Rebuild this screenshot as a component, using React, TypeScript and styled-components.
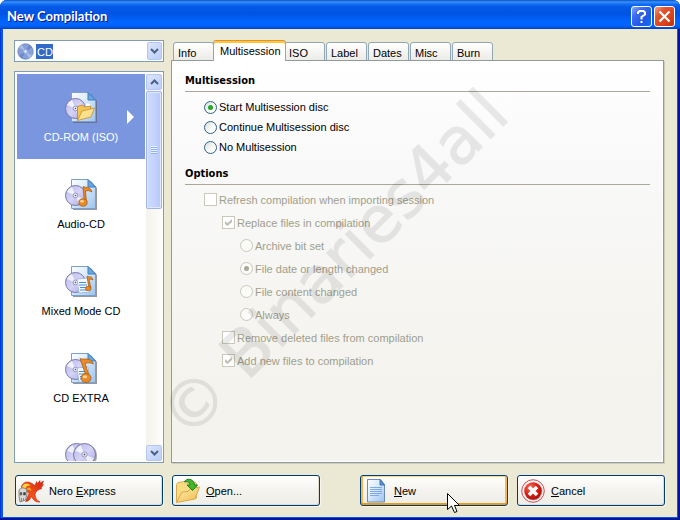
import React, { useState } from "react";
import styled, { createGlobalStyle, css } from "styled-components";

const uiFont = `"Liberation Sans", Arial, sans-serif`;
const headingFont = `"DejaVu Sans Condensed", "DejaVu Sans", sans-serif`;

const GlobalStyle = createGlobalStyle`
  *, *::before, *::after { box-sizing: border-box; }
  body { margin: 0; background: #fff; font: 11px/14px ${uiFont}; color: #000; }
  button, select, input { font: inherit; color: inherit; margin: 0; }
`;

const Window = styled.div`
  height: 100vh;
  min-height: 400px;
  display: flex;
  flex-direction: column;
  padding: 0 3px 3px;
  overflow: hidden;
  border-radius: 7px 7px 0 0;
  background: #0b55ea;
  box-shadow: inset -2px -2px #00169c, inset 1px 0 #0038d0;
`;

const TitleBar = styled.header`
  flex: none;
  height: 29px;
  margin: 0 -3px;
  padding: 3px 5px 0 7px;
  display: flex;
  align-items: center;
  gap: 2px;
  background: linear-gradient(#0a50c8 0, #3a92fb 2px, #1370f6 4px, #0358e6 7px, #0054e3 14px, #0062fb 20px, #0066ff 25px, #0058ea 27px, #0040c4 29px);
`;

const Title = styled.h1`
  flex: 1;
  margin: 0;
  font: bold 13px/18px Lato, "Open Sans", sans-serif;
  color: #fff;
  text-shadow: 1px 1px #0a1883;
`;

const CaptionButton = styled.button<{ $close?: boolean }>`
  width: 21px;
  height: 21px;
  padding: 0;
  display: grid;
  place-items: center;
  border: 1px solid #fff;
  border-radius: 3px;
  background: ${(p) =>
    p.$close
      ? "linear-gradient(135deg, #f0a088, #e2562f 30%, #d8401a 70%, #b83410)"
      : "linear-gradient(135deg, #8fa9f5, #3c6cec 30%, #2058e8 65%, #1a6cf4)"};
`;

const Body = styled.main`
  flex: 1;
  min-height: 0;
  display: flex;
  flex-direction: column;
  background: #ebe8d4;
`;

const Columns = styled.div`
  flex: 1;
  min-height: 0;
  display: grid;
  grid-template-columns: 150px minmax(0, 1fr);
  gap: 7px;
  padding: 11px 13px 0 11px;
`;

const Sidebar = styled.div`
  min-height: 0;
  display: flex;
  flex-direction: column;
  gap: 9px;
`;

const Combo = styled.div`
  position: relative;
  flex: none;
  height: 22px;
  border: 1px solid #7f9db9;
  background: #fff;
  > svg { position: absolute; left: 2px; top: 2px; pointer-events: none; }
`;

const ComboSelect = styled.select`
  width: 100%;
  height: 20px;
  padding: 1px 20px 0 22px;
  border: 0;
  border-radius: 0;
  outline: 0;
  appearance: none;
  color: #fff;
  background: linear-gradient(#316ac5, #316ac5) 21px 3px / 17px 15px no-repeat #fff;
  option { color: #000; }
`;

const arrowFace = css`
  display: grid;
  place-items: center;
  border: 1px solid #b4c6f0;
  border-radius: 2px;
  background: linear-gradient(135deg, #dce6fe, #b9cdf8);
`;

const ComboArrow = styled.span`
  ${arrowFace}
  position: absolute;
  right: 1px;
  top: 1px;
  width: 15px;
  height: 18px;
  pointer-events: none;
`;

const ListFrame = styled.div`
  flex: 1;
  min-height: 0;
  display: grid;
  grid-template-columns: minmax(0, 1fr) 16px;
  gap: 1px;
  padding: 2px 1px 1px 2px;
  border: 1px solid #7f9db9;
  background: #fff;
`;

const TypeList = styled.div`
  display: flex;
  flex-direction: column;
  gap: 2px;
  overflow: hidden;
`;

const TypeItem = styled.button<{ $selected?: boolean }>`
  position: relative;
  flex: none;
  height: 85px;
  padding: 17px 0 0;
  display: flex;
  flex-direction: column;
  align-items: center;
  justify-content: flex-start;
  gap: 7px;
  border: 0;
  color: ${(p) => (p.$selected ? "#fff" : "#000")};
  background: ${(p) => (p.$selected ? "#7a96df" : "#fff")};
`;

const SelectedArrow = styled.svg`
  position: absolute;
  right: 11px;
  top: 36px;
`;

const ScrollBar = styled.div`
  display: flex;
  flex-direction: column;
  gap: 1px;
  background: linear-gradient(90deg, #f3f2ec, #fdfdfa);
`;

const ScrollButton = styled.button`
  ${arrowFace}
  flex: none;
  height: 16px;
  padding: 0;
`;

const ScrollThumb = styled.div`
  height: 118px;
  display: grid;
  place-items: center;
  border: 1px solid #9fb5e8;
  border-radius: 2px;
  background: linear-gradient(90deg, #cfdcfe, #c4d3fc 50%, #b6c8f6);
  box-shadow: inset 0 0 0 1px #dfe8ff;
`;

const ScrollGap = styled.div`
  flex: 1;
`;

const Main = styled.div`
  min-width: 0;
  min-height: 0;
  display: flex;
  flex-direction: column;
`;

const TabList = styled.div`
  flex: none;
  height: 21px;
  display: flex;
  align-items: flex-end;
  gap: 1px;
  padding-left: 2px;
  margin-bottom: -1px;
`;

const Tab = styled.button<{ $active?: boolean }>`
  width: 41px;
  height: 19px;
  padding: 2px 0 0 4px;
  text-align: left;
  border: 1px solid #91a7b4;
  border-radius: 3px 3px 0 0;
  background: linear-gradient(#fff, #ecebe6);
  ${(p) =>
    p.$active &&
    css`
      z-index: 1;
      width: 73px;
      height: 21px;
      margin: 0 -3px 0 -2px;
      padding: 0 0 0 6px;
      border-top-color: #e5902a;
      border-bottom: 0;
      background: #fff;
      box-shadow: inset 0 2px #ffc83c;
    `}
`;

const Panel = styled.section`
  position: relative;
  flex: 1;
  min-height: 0;
  padding: 12px 13px 0 13px;
  border: 1px solid #919b9c;
  background: linear-gradient(#fff, #f9f9f9 25%, #f4f3ee 80%);
  box-shadow: inset -1px -1px #fff, 1px 1px #cfccb9;
`;

const Group = styled.fieldset`
  min-width: 0;
  margin: 0 0 9px;
  padding: 0;
  border: 0;
`;

const Legend = styled.legend`
  width: 100%;
  height: 19px;
  padding: 1px 0 0;
  border-bottom: 1px solid #aca899;
  font: bold 11px/14px ${headingFont};
`;

const Choices = styled.div<{ $row: number; $top: number }>`
  display: grid;
  grid-auto-rows: ${(p) => p.$row}px;
  padding-top: ${(p) => p.$top}px;
`;

const Choice = styled.label<{ $level: number; $off?: boolean }>`
  display: flex;
  align-items: center;
  gap: 2px;
  padding-left: ${(p) => p.$level * 18 + 1}px;
  color: ${(p) => (p.$off ? "#a09f8c" : "#000")};
`;

const Radio = styled.input.attrs({ type: "radio" })`
  appearance: none;
  flex: none;
  width: 13px;
  height: 13px;
  display: grid;
  place-items: center;
  border: 1px solid #2c628f;
  border-radius: 50%;
  background: linear-gradient(135deg, #dcdcd6, #fff 70%);
  &:checked::after {
    content: "";
    width: 5px;
    height: 5px;
    border-radius: 50%;
    background: #25a825;
  }
  &:disabled { border-color: #cac8bb; background: #fbfbf8; }
  &:disabled:checked::after { background: #aaa898; }
`;

const CheckBox = styled.input.attrs({ type: "checkbox" })`
  appearance: none;
  flex: none;
  width: 13px;
  height: 13px;
  display: grid;
  place-items: center;
  border: 1px solid #cac8bb;
  background: #fff;
  &:checked::after {
    content: "";
    width: 7px;
    height: 7px;
    background: #c0beaf;
    clip-path: polygon(0 28%, 36% 60%, 100% 0, 100% 42%, 36% 100%, 0 70%);
  }
`;

const Watermark = styled.div`
  position: absolute;
  left: 162px;
  top: 203px;
  transform: translate(-50%, -50%) rotate(-45deg);
  font: 64px/74px "DejaVu Sans", sans-serif;
  white-space: nowrap;
  color: #000;
  -webkit-text-stroke: 1px #000;
  opacity: 0.08;
  pointer-events: none;
`;

const Footer = styled.footer`
  flex: none;
  display: flex;
  gap: 9px;
  padding: 12px 12px 11px 12px;
`;

const FooterGap = styled.div`
  flex: 1;
`;

const PushButton = styled.button<{ $hot?: boolean }>`
  position: relative;
  width: 148px;
  height: 31px;
  padding: 0 0 0 2px;
  display: grid;
  grid-template-columns: 26px 1fr;
  align-items: center;
  gap: 5px;
  text-align: left;
  border: 1px solid #003c74;
  border-radius: 3px;
  background: linear-gradient(#fff, #f4f3ef 50%, #eeede7);
  box-shadow: ${(p) =>
    p.$hot
      ? "inset 0 1px #fdd889, inset 0 -2px #e89a1c, inset 2px 0 #f9b94a, inset -2px 0 #f9b94a"
      : "inset -1px -1px #dedcd0"}, 1px 1px #f7f6ee;
  svg { justify-self: center; }
`;

const ButtonText = styled.span`
  padding-top: 1px;
`;

const Pointer = styled.svg`
  position: absolute;
  left: 86px;
  top: 17px;
  pointer-events: none;
`;

const Chevron = ({ up }: { up?: boolean }) => (
  <svg width="9" height="6" viewBox="0 0 9 6" aria-hidden="true">
    <path d={up ? "M1 5 4.5 1.5 8 5" : "M1 1 4.5 4.5 8 1"} fill="none" stroke="#4d6185" strokeWidth="2" />
  </svg>
);

const Disc = ({ cx, cy, r }: { cx: number; cy: number; r: number }) => (
  <g>
    <circle cx={cx} cy={cy} r={r} fill="url(#discFace)" stroke="#7777a4" />
    <path d={`M${cx} ${cy}L${cx - r * 0.85} ${cy - r * 0.35}A${r * 0.92} ${r * 0.92} 0 0 1 ${cx - r * 0.35} ${cy - r * 0.85}Z`} fill="#fff" opacity="0.75" />
    <path d={`M${cx} ${cy}L${cx + r * 0.85} ${cy + r * 0.35}A${r * 0.92} ${r * 0.92} 0 0 1 ${cx + r * 0.35} ${cy + r * 0.85}Z`} fill="#fff" opacity="0.7" />
    <circle cx={cx} cy={cy} r={r * 0.24} fill="#eef0ff" stroke="#8282a8" strokeWidth="0.8" />
    <circle cx={cx} cy={cy} r={r * 0.08} fill="#555" />
  </g>
);

const Page = () => (
  <g>
    <path d="M8 3h18l6 7v22H8z" fill="#5c6170" opacity="0.65" />
    <path d="M6.500 1.500H23L30.500 9v21.500h-24z" fill="url(#pageFace)" stroke="#7ba0cc" />
    <path d="M23 1.500V9h7.500z" fill="#6aa6e4" stroke="#3f7fc0" strokeLinejoin="round" />
  </g>
);

const Sheet = ({ x, y }: { x: number; y: number }) => (
  <g transform={`translate(${x} ${y})`}>
    <path d="M0 1 11 0l2 14-11 1z" fill="#f4f9ff" stroke="#8fb4dd" strokeWidth="0.8" />
    <path d="M2 4.500h7M2 7h8M3 9.500h8M3 12h7" stroke="#4b8bd4" strokeWidth="1.200" />
  </g>
);

const noteFill = { fill: "#ec8a26", stroke: "#9c5710", strokeWidth: 0.7 };

type Kind = "rom" | "audio" | "mixed" | "extra" | "copy";

const TypeIcon = ({ kind }: { kind: Kind }) => (
  <svg width="32" height="32" viewBox="0 0 32 32" aria-hidden="true">
    {kind === "copy" ? (
      <>
        <ellipse cx="20.500" cy="17" rx="11.500" ry="12" fill="#555" opacity="0.5" />
        <Disc cx={11.5} cy={15.5} r={11} />
        <Disc cx={19.5} cy={15.5} r={11} />
      </>
    ) : (
      <>
        <Page />
        <Disc cx={10.5} cy={17.5} r={10} />
      </>
    )}
    {kind === "rom" && (
      <g>
        <circle cx="23" cy="15" r="2.500" fill="#fff" />
        <path d="M12.500 29V15.500l5-1.500 2 2 6-1v4z" fill="#f5c654" stroke="#b98525" strokeWidth="0.8" />
        <path d="M12.500 29.500 17 20l12.500-3-3.500 9z" fill="#fde08c" stroke="#c2902f" strokeWidth="0.8" />
      </g>
    )}
    {kind === "audio" && (
      <g>
        <path d="M19.500 25 18 8.500c3 1.500 7-.5 9 5.500-2.500-1.500-4.500-1.500-6.500-1L21.500 24z" {...noteFill} />
        <ellipse cx="18" cy="24.500" rx="4.200" ry="3.700" {...noteFill} />
        <ellipse cx="17" cy="23.300" rx="1.800" ry="1.200" fill="#ffd39a" />
      </g>
    )}
    {kind === "mixed" && (
      <g>
        <Sheet x={12} y={13} />
        <path d="M24 24 22 11c2.500 1.500 5-.5 6 4-1.500-1-3-1-4-.5L26 23z" {...noteFill} />
        <ellipse cx="23.200" cy="23.500" rx="2.800" ry="2.200" {...noteFill} />
      </g>
    )}
    {kind === "extra" && (
      <g>
        <Sheet x={12} y={15} />
        <path d="M22 27 15 6.500c5 2 10-2.500 13.500 5.500-3-1.500-6-1.500-8.500-.5L25 26z" {...noteFill} />
        <ellipse cx="21" cy="26" rx="5" ry="4.500" {...noteFill} />
        <ellipse cx="20" cy="24.700" rx="2.200" ry="1.500" fill="#ffd39a" />
      </g>
    )}
  </svg>
);

const IconDefs = () => (
  <svg width="0" height="0" aria-hidden="true" display="block">
    <defs>
      <linearGradient id="discFace" x1="0" y1="0" x2="1" y2="1">
        <stop offset="0" stopColor="#b9b7ea" />
        <stop offset="0.500" stopColor="#d5d3f8" />
        <stop offset="1" stopColor="#a9a6e0" />
      </linearGradient>
      <linearGradient id="pageFace" x1="0" y1="0" x2="1" y2="1">
        <stop offset="0" stopColor="#fdfeff" />
        <stop offset="0.400" stopColor="#dcecfc" />
        <stop offset="1" stopColor="#9cc4ee" />
      </linearGradient>
      <linearGradient id="folderFace" x1="0" y1="0" x2="1" y2="1">
        <stop offset="0" stopColor="#ffeeb0" />
        <stop offset="1" stopColor="#f0b94a" />
      </linearGradient>
      <linearGradient id="flame" x1="1" y1="0" x2="0" y2="1">
        <stop offset="0" stopColor="#d8200c" />
        <stop offset="0.600" stopColor="#f0531c" />
        <stop offset="1" stopColor="#cc2410" />
      </linearGradient>
      <radialGradient id="stop" cx="0.350" cy="0.300" r="0.800">
        <stop offset="0" stopColor="#f8735c" />
        <stop offset="0.500" stopColor="#dc2014" />
        <stop offset="1" stopColor="#a80c08" />
      </radialGradient>
    </defs>
  </svg>
);

const NeroIcon = () => (
  <svg width="26" height="26" viewBox="0 0 26 26" aria-hidden="true">
    <path d="M3 9C5 4 9 2.500 14 5.500l3 2 1.500-4 1 2L22 2.500v2.500L25.500 3l-1.500 4 1.500-.5-2.500 3.500 1 .5c-4 1-6.500 3-7 6 .5 4 2 6 5 7.500-4 .5-6.500-1.500-8.500-5.500-1.500 3-3 5-6 5l3.500-8-3-3z" fill="url(#flame)" stroke="#b8200c" strokeWidth="0.500" />
    <path d="M4 9.500c1.500-5.500 7-4.500 9-1.500-3-1-4.500 0-5.500 2.500z" fill="#ffd83a" />
    <path d="M8.500 11.500c1.500-3 4-2.500 5 1z" fill="#fba42a" />
    <path d="M1 12c1.500-2.500 5-2.500 7.500-1l.5 5-1.500 6L2 24l-1-6z" fill="#d9d8d5" stroke="#6f6f6f" strokeWidth="0.800" />
    <path d="M2.200 14.500h1.500v2.500H2.200zM5.500 14.500h2v2.500h-2zM3.500 20v3M5.500 20v2.500" fill="#3b3b3b" stroke="#555" strokeWidth="0.600" />
  </svg>
);

const OpenIcon = () => (
  <svg width="26" height="26" viewBox="0 0 26 26" aria-hidden="true">
    <path d="M1.500 24V6.500L3 4.500l7-1 2 2 8-1.500 1.500 2V20z" fill="#fbdc82" stroke="#d8ab4c" />
    <path d="M1.500 24.500 7 14l6-.5 2-2.500L24.500 9 20 21z" fill="url(#folderFace)" stroke="#dbab4c" />
    <path d="M9.500 4C11-.5 19 .5 19.500 7h3L17.500 12.500l-5.500-5.500h3C15 4.500 12.500 3 9.500 4z" fill="#43b72f" stroke="#1e7f18" />
  </svg>
);

const NewIcon = () => (
  <svg width="22" height="24" viewBox="0 0 22 24" aria-hidden="true">
    <path d="M2.500.5h13l4 5v17.500h-17z" fill="url(#pageFace)" stroke="#6a8cbc" />
    <path d="M15 .5v5.500h4.500z" fill="#5b93d8" stroke="#4474b4" />
    <path d="M5 8.500h12M5 10.500h12M5 12.500h12M5 14.500h12M5 16.500h9" stroke="#82a9de" />
  </svg>
);

const CancelIcon = () => (
  <svg width="24" height="24" viewBox="0 0 24 24" aria-hidden="true">
    <circle cx="12" cy="12" r="11.300" fill="#f9efee" stroke="#c5545a" />
    <circle cx="12.500" cy="12.500" r="9" fill="#9a9a9a" opacity="0.6" />
    <circle cx="12" cy="12" r="8.700" fill="url(#stop)" />
    <path d="m8 8 8 8M16 8l-8 8" stroke="#fff" strokeWidth="3.600" />
  </svg>
);

const types: { kind: Kind; name: string; caption?: string }[] = [
  { kind: "rom", name: "CD-ROM (ISO)", caption: "CD-ROM (ISO)" },
  { kind: "audio", name: "Audio-CD", caption: "Audio-CD" },
  { kind: "mixed", name: "Mixed Mode CD", caption: "Mixed Mode CD" },
  { kind: "extra", name: "CD EXTRA", caption: "CD EXTRA" },
  { kind: "copy", name: "CD Copy" },
];

const tabs = ["Info", "Multisession", "ISO", "Label", "Dates", "Misc", "Burn"];
const modes = ["Start Multisession disc", "Continue Multisession disc", "No Multisession"];

const options: { type: "check" | "radio"; level: number; label: string; on?: boolean }[] = [
  { type: "check", level: 1, label: "Refresh compilation when importing session" },
  { type: "check", level: 2, label: "Replace files in compilation", on: true },
  { type: "radio", level: 3, label: "Archive bit set" },
  { type: "radio", level: 3, label: "File date or length changed", on: true },
  { type: "radio", level: 3, label: "File content changed" },
  { type: "radio", level: 3, label: "Always" },
  { type: "check", level: 2, label: "Remove deleted files from compilation" },
  { type: "check", level: 2, label: "Add new files to compilation", on: true },
];

export default function App() {
  const [type, setType] = useState<Kind>("rom");
  const [tab, setTab] = useState("Multisession");
  const [mode, setMode] = useState(modes[0]);

  return (
    <>
      <GlobalStyle />
      <Window>
        <TitleBar>
          <Title>New Compilation</Title>
          <CaptionButton aria-label="Help">
            <svg width="11" height="15" viewBox="0 0 11 15" aria-hidden="true">
              <path d="M2 5V3.500L3.500 2h4L9 3.500v2L5.500 8v2.500" fill="none" stroke="#fff" strokeWidth="2" />
              <path d="M4.500 12h2v2h-2z" fill="#fff" />
            </svg>
          </CaptionButton>
          <CaptionButton $close aria-label="Close">
            <svg width="13" height="13" viewBox="0 0 13 13" aria-hidden="true">
              <path d="m1.500 1.500 10 10M11.500 1.500l-10 10" stroke="#fff" strokeWidth="2.200" />
            </svg>
          </CaptionButton>
        </TitleBar>
        <Body>
          <Columns>
            <Sidebar>
              <Combo>
                <ComboSelect aria-label="Disc type" defaultValue="CD">
                  <option>CD</option>
                  <option>DVD</option>
                </ComboSelect>
                <svg width="17" height="17" viewBox="0 0 17 17" aria-hidden="true">
                  <circle cx="8.500" cy="8.500" r="7.700" fill="#86a0d8" stroke="#6480bc" strokeWidth="0.800" />
                  <path d="M8.500 8.500 2 4.500l3-3zM8.500 8.500l6.500 4-3 3z" fill="#a9bce8" />
                  <path d="M8.500 8.500 12 1.500l3 3zM8.500 8.500l-3.500 7-3-3z" fill="#6c88cc" />
                  <circle cx="8.500" cy="8.500" r="2.200" fill="#a5b8e6" />
                  <circle cx="8.500" cy="8.500" r="1" fill="#fff" />
                </svg>
                <ComboArrow><Chevron /></ComboArrow>
              </Combo>
              <ListFrame>
                <TypeList role="listbox" aria-label="Compilation type">
                  {types.map((t) => (
                    <TypeItem
                      key={t.kind}
                      role="option"
                      aria-selected={type === t.kind}
                      aria-label={t.name}
                      $selected={type === t.kind}
                      onClick={() => setType(t.kind)}
                    >
                      <TypeIcon kind={t.kind} />
                      {t.caption}
                      {type === t.kind && (
                        <SelectedArrow width="7" height="14" viewBox="0 0 7 14" aria-hidden="true">
                          <path d="M0 0 7 7 0 14z" fill="#fff" />
                        </SelectedArrow>
                      )}
                    </TypeItem>
                  ))}
                </TypeList>
                <ScrollBar>
                  <ScrollButton aria-label="Scroll up"><Chevron up /></ScrollButton>
                  <ScrollThumb>
                    <svg width="6" height="8" viewBox="0 0 6 8" aria-hidden="true">
                      <path d="M0 .5h6M0 2.500h6M0 4.500h6M0 6.500h6" stroke="#eef4fe" />
                      <path d="M0 1.500h6M0 3.500h6M0 5.500h6M0 7.500h6" stroke="#8cb0f8" />
                    </svg>
                  </ScrollThumb>
                  <ScrollGap />
                  <ScrollButton aria-label="Scroll down"><Chevron /></ScrollButton>
                </ScrollBar>
              </ListFrame>
            </Sidebar>
            <Main>
              <TabList role="tablist">
                {tabs.map((t) => (
                  <Tab key={t} role="tab" aria-selected={tab === t} $active={tab === t} onClick={() => setTab(t)}>
                    {t}
                  </Tab>
                ))}
              </TabList>
              <Panel role="tabpanel">
                <Group>
                  <Legend>Multisession</Legend>
                  <Choices $row={20} $top={5}>
                    {modes.map((m) => (
                      <Choice key={m} $level={1}>
                        <Radio name="mode" checked={mode === m} onChange={() => setMode(m)} />
                        {m}
                      </Choice>
                    ))}
                  </Choices>
                </Group>
                <Group>
                  <Legend>Options</Legend>
                  <Choices $row={23} $top={3}>
                    {options.map((o) => (
                      <Choice key={o.label} $level={o.level} $off>
                        {o.type === "check" ? (
                          <CheckBox disabled defaultChecked={o.on} />
                        ) : (
                          <Radio name="replace" disabled defaultChecked={o.on} />
                        )}
                        {o.label}
                      </Choice>
                    ))}
                  </Choices>
                </Group>
                <Watermark>© Binaries4all</Watermark>
              </Panel>
            </Main>
          </Columns>
          <Footer>
            <PushButton>
              <NeroIcon />
              <ButtonText>Nero <u>E</u>xpress</ButtonText>
            </PushButton>
            <PushButton>
              <OpenIcon />
              <ButtonText><u>O</u>pen...</ButtonText>
            </PushButton>
            <FooterGap />
            <PushButton $hot>
              <NewIcon />
              <ButtonText><u>N</u>ew</ButtonText>
              <Pointer width="13" height="21" viewBox="0 0 13 21" aria-hidden="true">
                <path d="M.5.5v16l4-3.500 3 6.500 2.500-1-2.500-6h5z" fill="#fff" stroke="#000" />
              </Pointer>
            </PushButton>
            <PushButton>
              <CancelIcon />
              <ButtonText><u>C</u>ancel</ButtonText>
            </PushButton>
          </Footer>
        </Body>
      </Window>
      <IconDefs />
    </>
  );
}
